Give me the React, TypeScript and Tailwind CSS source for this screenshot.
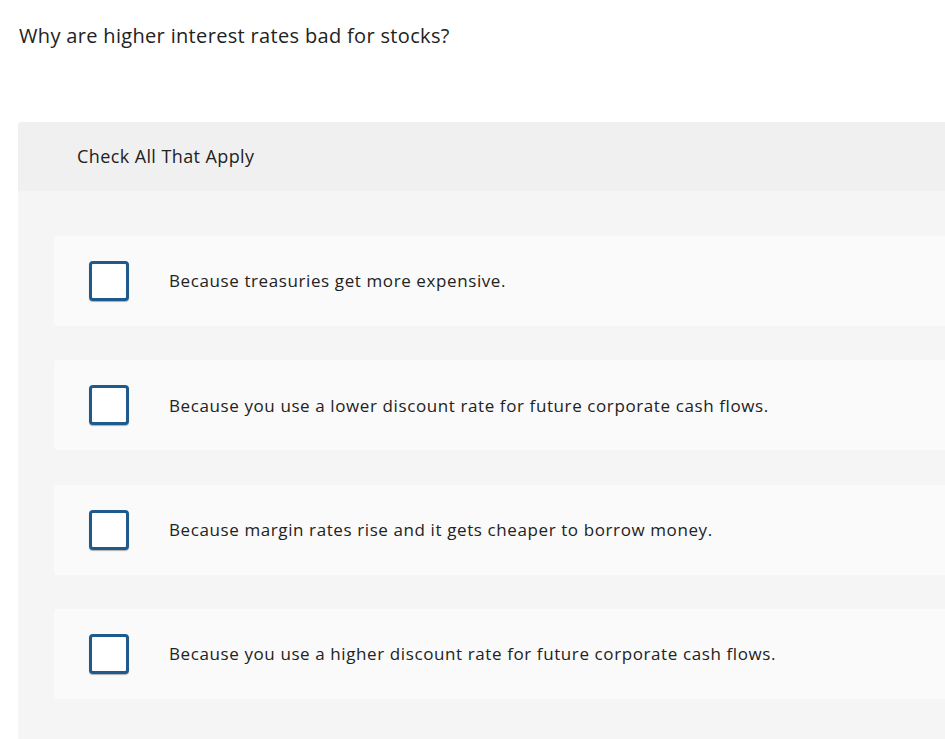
const OPTIONS = [
  'Because treasuries get more expensive.',
  'Because you use a lower discount rate for future corporate cash flows.',
  'Because margin rates rise and it gets cheaper to borrow money.',
  'Because you use a higher discount rate for future corporate cash flows.',
];

export default function App() {
  return (
    <div className="min-h-screen bg-white text-[#222] overflow-hidden" style={{ fontFamily: '"Open Sans", Arial, sans-serif' }}>
      <h1 className="pl-[19px] pt-[22px] text-[20px] leading-[28px] font-normal tracking-[0.33px]">
        Why are higher interest rates bad for stocks?
      </h1>

      <div className="ml-[18px] mt-[72px] bg-[#f5f5f5] rounded-tl-[4px]">
        <div className="h-[69px] bg-[#f0f0f0] rounded-tl-[4px] flex items-center pl-[59px] text-[18px] tracking-[0.4px]">
          Check All That Apply
        </div>

        <div className="pl-[36px] pt-[45px] pb-[40px] flex flex-col gap-[34.4px]">
          {OPTIONS.map((text) => (
            <label key={text} className="h-[90px] bg-[#fafafa] rounded-l-[4px] flex items-center cursor-pointer">
              <span className="ml-[35px] w-[40px] h-[40px] shrink-0 rounded-[4px] border-[3px] border-[#1f5a8d] bg-white shadow-[0_1px_1px_rgba(0,0,0,0.3)]" />
              <span className="ml-[40px] text-[17px] tracking-[0.6px]">{text}</span>
            </label>
          ))}
        </div>
      </div>
    </div>
  );
}
